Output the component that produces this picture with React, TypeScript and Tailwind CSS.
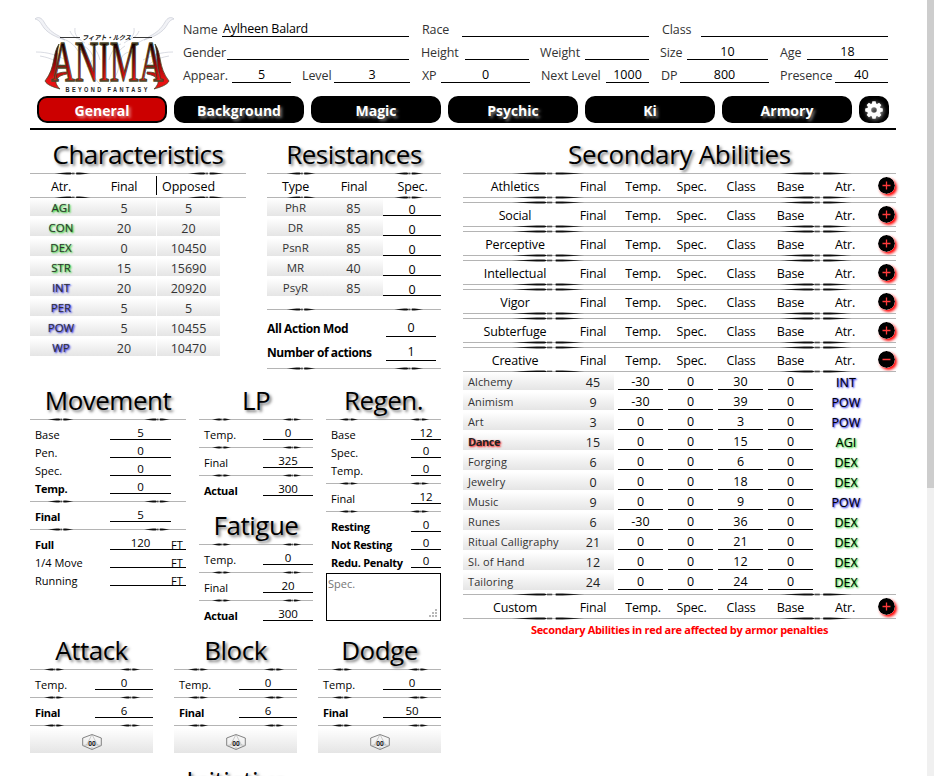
import React from "react";

const FONT = "font-['Open_Sans','Noto_Sans','Noto_Sans_CJK_JP',sans-serif]";

function Divider({ className = "" }: { className?: string }) {
  return (
    <svg className={`block h-[3px] w-full shrink-0 ${className}`} viewBox="0 0 1000 3" preserveAspectRatio="none">
      <rect x="0" y="1" width="1000" height="1" fill="#b4b4b4" />
      {[0, 618].map((x) => (
        <g key={x} transform={`translate(${x} 0)`}>
          <polygon points="113,1.5 150,0.9 192,0.9 192,2.1 150,2.1" fill="#000" opacity="0.85" />
          <polygon points="125,1.5 170,0 188,0 194,1.5 188,3 170,3" fill="#000" opacity="0.45" />
          <rect x="194" y="0.6" width="12" height="1.8" fill="#000" opacity="0.6" />
          <polygon points="214,0.9 245,0.9 280,1.5 245,2.1 214,2.1" fill="#000" opacity="0.85" />
          <polygon points="214,0 230,0 268,1.5 230,3 214,3" fill="#000" opacity="0.45" />
        </g>
      ))}
    </svg>
  );
}

function Title({ children, spacing = "tracking-[-0.5px]" }: { children: string; spacing?: string }) {
  return (
    <h2 className={`flex h-[42px] shrink-0 items-center justify-center whitespace-nowrap pt-[6px] text-[26px] leading-none text-black [text-shadow:2px_2px_3px_rgba(0,0,0,0.55)] ${spacing}`}>
      {children}
    </h2>
  );
}

type FieldProps = { label: string; value?: string; lw: string; vw: string; left?: boolean };

function Field({ label, value = "", lw, vw, left }: FieldProps) {
  return (
    <div className="flex h-[23px]">
      <span className={`${lw} shrink-0 whitespace-nowrap pt-[7px] text-[12.5px] leading-[18px] tracking-[-0.1px] text-[#333]`}>{label}</span>
      <span className={`${vw} ${left ? "pl-px text-left tracking-[-0.2px]" : "text-center"} shrink-0 whitespace-nowrap border-b border-black pt-[6px] text-[12.5px] leading-[17px] text-black`}>
        {value}
      </span>
    </div>
  );
}

function Tab({ label, active }: { label: string; active?: boolean }) {
  return (
    <button className={`h-[27px] w-[130px] rounded-[10px] border-2 border-black pt-px text-[14px] leading-[23px] font-bold text-white [text-shadow:2px_2px_3px_rgba(255,255,255,0.5)] ${active ? "bg-[#cc0000]" : "bg-black"}`}>
      {label}
    </button>
  );
}

const CELL = "h-[18px] bg-linear-to-b from-white to-[#e5e5e5]";
const GREEN = "[text-shadow:1px_1px_2px_#00c800,0_0_1px_#00c80080]";
const BLUE = "[text-shadow:1px_1px_2px_#0000e0,0_0_1px_#0000e080]";
const HEAD = "flex h-[21px] text-center text-[12.5px] leading-[24px] tracking-[-0.15px]";

const attributes = [
  ["AGI", "5", "5"], ["CON", "20", "20"], ["DEX", "0", "10450"], ["STR", "15", "15690"],
  ["INT", "20", "20920"], ["PER", "5", "5"], ["POW", "5", "10455"], ["WP", "20", "10470"],
];

function glow(a: string) {
  return ["AGI", "CON", "DEX", "STR"].includes(a) ? GREEN : BLUE;
}

function Characteristics() {
  return (
    <section className="w-[216px]">
      <Title>Characteristics</Title>
      <Divider />
      <div className={HEAD}>
        <span className="w-[62px]">Atr.</span>
        <span className="w-[64px]">Final</span>
        <span className="my-px w-[64px] border-l border-black leading-[22px] tracking-normal">Opposed</span>
      </div>
      <Divider className="-mb-px" />
      {attributes.map(([a, f, o]) => (
        <div key={a} className="mb-[2px] flex h-[18px] text-center text-[12.5px] leading-[21px] text-[#333]">
          <span className={`${CELL} w-[62px] text-[11.5px] leading-[20px] ${glow(a)}`}>{a}</span>
          <span className={`${CELL} w-[64px]`}>{f}</span>
          <span className={`${CELL} ml-px w-[63px]`}>{o}</span>
        </div>
      ))}
    </section>
  );
}

const resistances = [["PhR", "85"], ["DR", "85"], ["PsnR", "85"], ["MR", "40"], ["PsyR", "85"]];

function Resistances() {
  return (
    <section className="w-[174px]">
      <Title>Resistances</Title>
      <Divider />
      <div className={HEAD}>
        <span className="w-[57px]">Type</span>
        <span className="w-[60px]">Final</span>
        <span className="w-[57px]">Spec.</span>
      </div>
      <Divider className="-mb-px" />
      {resistances.map(([n, v]) => (
        <div key={n} className="mb-[2px] flex h-[18px] text-center text-[12.5px] leading-[21px] text-[#333]">
          <span className={`${CELL} w-[57px] text-[11.5px] leading-[20px]`}>{n}</span>
          <span className={`${CELL} w-[59px]`}>{v}</span>
          <span className="h-[18px] w-[58px] border-b border-black leading-[24px] text-black">0</span>
        </div>
      ))}
      <Divider className="mt-[12px]" />
      {[["All Action Mod", "0"], ["Number of actions", "1"]].map(([n, v], i) => (
        <div key={n} className={`flex h-[24px] items-end ${i === 0 ? "mt-[2px]" : ""}`}>
          <span className="w-[119px] whitespace-nowrap text-[12px] leading-[17px] font-bold tracking-[-0.4px]">{n}</span>
          <span className="w-[50px] border-b border-black text-center text-[12.5px] leading-[17px]">{v}</span>
        </div>
      ))}
      <Divider className="mt-[6px]" />
    </section>
  );
}

function Stat({ label, value = "", vw, bold, unit }: { label: string; value?: string; vw: string; bold?: boolean; unit?: boolean }) {
  return (
    <div className="flex h-[18px] items-stretch">
      <span className={`grow whitespace-nowrap pl-[5px] pt-[4px] text-[11px] leading-[17px] ${bold ? "font-bold tracking-[-0.3px]" : ""}`}>{label}</span>
      <span className={`${vw} shrink-0 border-b border-black pt-[4px] text-center text-[11.5px] leading-[14px]`}>{value}</span>
      {unit ? (
        <span className="w-[15px] shrink-0 border-b border-black pt-[4px] text-[11px] leading-[17px]">FT</span>
      ) : null}
    </div>
  );
}

const GAP = "mt-[6px] mb-px";

function Movement() {
  return (
    <section className="w-[156px]">
      <Title>Movement</Title>
      <Divider className="mb-px" />
      <div className="pr-[15px]">
        <Stat label="Base" value="5" vw="w-[61px]" />
        <Stat label="Pen." value="0" vw="w-[61px]" />
        <Stat label="Spec." value="0" vw="w-[61px]" />
        <Stat label="Temp." value="0" vw="w-[61px]" bold />
      </div>
      <Divider className={GAP} />
      <div className="pr-[15px]">
        <Stat label="Final" value="5" vw="w-[61px]" bold />
      </div>
      <Divider className={GAP} />
      <Stat label="Full" value="120" vw="w-[61px]" bold unit />
      <Stat label="1/4 Move" vw="w-[61px]" unit />
      <Stat label="Running" vw="w-[61px]" unit />
    </section>
  );
}

function Pool({ title, final }: { title: string; final: string }) {
  return (
    <section>
      <Title>{title}</Title>
      <Divider className="mb-px" />
      <Stat label="Temp." value="0" vw="w-[50px]" />
      <Divider className={GAP} />
      <Stat label="Final" value={final} vw="w-[50px]" />
      <Divider className={GAP} />
      <Stat label="Actual" value="300" vw="w-[50px]" bold />
    </section>
  );
}

function Regen() {
  return (
    <section className="w-[115px]">
      <Title>Regen.</Title>
      <Divider className="mb-px" />
      <Stat label="Base" value="12" vw="w-[30px]" />
      <Stat label="Spec." value="0" vw="w-[30px]" />
      <Stat label="Temp." value="0" vw="w-[30px]" />
      <Divider className={GAP} />
      <Stat label="Final" value="12" vw="w-[30px]" />
      <Divider className={GAP} />
      <Stat label="Resting" value="0" vw="w-[30px]" bold />
      <Stat label="Not Resting" value="0" vw="w-[30px]" bold />
      <Stat label="Redu. Penalty" value="0" vw="w-[30px]" bold />
      <div className="mt-[5px] flex h-[48px] items-end justify-between border border-black">
        <span className="self-start pl-px pt-px text-[11px] leading-[17px] text-[#757575]">Spec.</span>
        <svg className="mr-[2px] mb-[2px] size-[9px]" viewBox="0 0 9 9" fill="#b8b8b8">
          <rect x="6" y="0" width="2" height="2" />
          <rect x="3" y="3" width="2" height="2" />
          <rect x="6" y="3" width="2" height="2" />
          <rect x="0" y="6" width="2" height="2" />
          <rect x="3" y="6" width="2" height="2" />
          <rect x="6" y="6" width="2" height="2" />
        </svg>
      </div>
    </section>
  );
}

function Dice() {
  return (
    <svg className="h-[16px] w-[20px]" viewBox="0 0 20 16" fill="none" stroke="#666" strokeWidth="0.8">
      <path d="M10 .5 19.3 4v7.500L10 15.500.7 11.500V4Z" />
      <path d="M10 .5 4.500 11h11Z M.7 11.500 4.500 11M19.300 11.500 15.500 11M10 15.500V13" stroke="#aaa" strokeWidth="0.6" />
      <text x="10" y="11.500" textAnchor="middle" fontSize="6.500" fontWeight="700" fill="#222" stroke="none">00</text>
    </svg>
  );
}

function Combat({ title, value }: { title: string; value: string }) {
  return (
    <section className="w-[123px]">
      <Title>{title}</Title>
      <Divider className="mb-px" />
      <Stat label="Temp." value="0" vw="w-[58px]" />
      <Divider className={GAP} />
      <Stat label="Final" value={value} vw="w-[58px]" bold />
      <Divider className={GAP} />
      <button className="flex h-[25px] w-full items-center justify-center bg-linear-to-b from-white to-[#e5e5e5] pt-[3px]">
        <Dice />
      </button>
    </section>
  );
}

const abilities = [
  ["Alchemy", "45", "-30", "30", "INT"], ["Animism", "9", "-30", "39", "POW"], ["Art", "3", "0", "3", "POW"],
  ["Dance", "15", "0", "15", "AGI"], ["Forging", "6", "0", "6", "DEX"], ["Jewelry", "0", "0", "18", "DEX"],
  ["Music", "9", "0", "9", "POW"], ["Runes", "6", "-30", "36", "DEX"], ["Ritual Calligraphy", "21", "0", "21", "DEX"],
  ["Sl. of Hand", "12", "0", "12", "DEX"], ["Tailoring", "24", "0", "24", "DEX"],
];

function GroupHeader({ name, open }: { name: string; open?: boolean }) {
  return (
    <div>
      <Divider />
      <div className={HEAD}>
        <span className="w-[104px]">{name}</span>
        <span className="w-[52px]">Final</span>
        <span className="w-[48px]">Temp.</span>
        <span className="w-[49px]">Spec.</span>
        <span className="w-[50px]">Class</span>
        <span className="w-[49px]">Base</span>
        <span className="w-[60px]">Atr.</span>
        <span className="flex grow items-center justify-center pl-px">
          <svg className="size-[17px] rounded-full shadow-[2px_2px_3px_#ff0000]" viewBox="0 0 17 17">
            <circle cx="8.500" cy="8.500" r="8.500" fill="#000" />
            <path d={open ? "M4.500 8.500h8" : "M4.500 8.500h8M8.500 4.500v8"} stroke="#ff3b3b" strokeWidth="1.300" />
          </svg>
        </span>
      </div>
      <Divider />
    </div>
  );
}

function SecondaryAbilities() {
  return (
    <section className="w-[433px]">
      <Title spacing="tracking-[-0.3px]">Secondary Abilities</Title>
      <div className="flex flex-col gap-[2px]">
        {["Athletics", "Social", "Perceptive", "Intellectual", "Vigor", "Subterfuge"].map((n) => (
          <GroupHeader key={n} name={n} />
        ))}
        <GroupHeader name="Creative" open />
      </div>
      <div className="-mt-px pb-px">
        {abilities.map(([n, f, t, c, a]) => (
          <div key={n} className="mb-[2px] flex h-[18px] text-center text-[12.5px]">
            <span className={`${CELL} w-[109px] pl-[5px] text-left text-[11px] leading-[20px] ${n === "Dance" ? "font-bold tracking-[-0.4px] text-[#222] [text-shadow:1px_1px_2px_#ff0000]" : "tracking-[0.1px] text-[#333]"}`}>{n}</span>
            <span className={`${CELL} w-[42px] leading-[21px] text-[#222]`}>{f}</span>
            {[t, "0", c, "0"].map((v, i) => (
              <span key={i} className={`h-[18px] w-[45px] border-b border-black leading-[19px] ${i === 0 ? "ml-[4px]" : "ml-[5px]"}`}>{v}</span>
            ))}
            <span className={`ml-[11px] w-[44px] leading-[21px] ${glow(a)}`}>{a}</span>
          </div>
        ))}
      </div>
      <GroupHeader name="Custom" />
      <p className="pt-[2px] text-center text-[11px] leading-[16px] font-bold tracking-[-0.32px] text-[#ff0000]">
        Secondary Abilities in red are affected by armor penalties
      </p>
    </section>
  );
}

function Logo() {
  return (
    <svg className="h-[80px] w-[144px] shrink-0" viewBox="32 14 144 80" fill="none">
      <defs>
        <linearGradient id="blood" x1="0" y1="42" x2="0" y2="84" gradientUnits="userSpaceOnUse">
          <stop offset="0.05" stopColor="#120000" />
          <stop offset="0.5" stopColor="#8c0707" />
          <stop offset="0.9" stopColor="#e81212" />
        </linearGradient>
        <g id="wing">
          <path d="M35 19c3-3 7-1 9 3 4 7 9 11 15 14l6 4c-9-3-16-6-21-12-3-4-4-8-9-9Z" fill="#f1f2f6" />
          <path d="M36 52c12 0 20 3 30 8M40 56c12 2 18 6 24 12M60 38c8 2 14 6 18 13M70 31c2 5 5 7 11 9M75 28c-1 7 3 11 10 15" />
          <path d="M84 46c8 5 12 13 11 24M80 52c8 2 9 8 7 15M88 44c6 2 10 8 12 16M92 60c-4 8 0 16 8 24" />
        </g>
      </defs>
      <g stroke="#c9cbd5" strokeWidth="0.7">
        <use href="#wing" />
        <use href="#wing" transform="matrix(-1 0 0 1 209 0)" />
      </g>
      <path d="M60 37.500h20M133 37.500h19" stroke="#222" strokeWidth="0.9" />
      <text x="82" y="40" fontSize="6.500" fontWeight="700" fontStyle="italic" fill="#111" textLength="49" lengthAdjust="spacingAndGlyphs" fontFamily="Noto Sans CJK JP">フィアト・ルクス</text>
      <g stroke="#4a4728" strokeWidth="0.8" fill="url(#blood)">
        <path d="M59 44C52 54 56 67 45 81c2 4 8 6 15 8-4-4-5-7-3-10 2-3 5-4 10-5v-2c-6 0-10 1-13 4 4-10 2-20 5-32Z" />
        <path d="M155 44c7 10 3 23 14 37-2 4-8 6-15 8 4-4 5-7 3-10-2-3-5-4-10-5v-2c6 0 10 1 13 4-4-10-2-20-5-32Z" />
        <text x="51" y="80.500" fontSize="56" fontFamily="Liberation Serif" textLength="112" lengthAdjust="spacingAndGlyphs" strokeWidth="1.300">ANIMA</text>
        <text x="51" y="80.500" fontSize="56" fontFamily="Liberation Serif" textLength="112" lengthAdjust="spacingAndGlyphs" stroke="none" aria-hidden="true" />
      </g>
      <text transform="translate(65.500 91.500) scale(0.7 1)" fontSize="8" fontWeight="700" fill="#222" textLength="117" fontFamily="Liberation Sans">BEYOND FANTASY</text>
    </svg>
  );
}

export default function App() {
  return (
    <div className={`flex h-[776px] w-[934px] justify-between overflow-hidden bg-white text-black ${FONT}`}>
      <div className="ml-[30px] w-[866px]">
        <header className="flex h-[96px] pt-[14px]">
          <div className="ml-[2px] w-[151px]"><Logo /></div>
          <div>
            <div className="flex">
              <Field label="Name" value="Aylheen Balard" lw="w-[39px]" vw="w-[187px]" left />
              <div className="w-[13px]" />
              <Field label="Race" lw="w-[40px]" vw="w-[187px]" />
              <div className="w-[13px]" />
              <Field label="Class" lw="w-[39px]" vw="w-[187px]" />
            </div>
            <div className="flex">
              <Field label="Gender" lw="w-[44px]" vw="w-[182px]" />
              <div className="w-[12px]" />
              <Field label="Height" lw="w-[44px]" vw="w-[64px]" />
              <div className="w-[11px]" />
              <Field label="Weight" lw="w-[45px]" vw="w-[64px]" />
              <div className="w-[11px]" />
              <Field label="Size" value="10" lw="w-[27px]" vw="w-[81px]" />
              <div className="w-[12px]" />
              <Field label="Age" value="18" lw="w-[27px]" vw="w-[81px]" />
            </div>
            <div className="flex">
              <Field label="Appear." value="5" lw="w-[49px]" vw="w-[59px]" />
              <div className="w-[11px]" />
              <Field label="Level" value="3" lw="w-[32px]" vw="w-[76px]" />
              <div className="w-[12px]" />
              <Field label="XP" value="0" lw="w-[19px]" vw="w-[89px]" />
              <div className="w-[11px]" />
              <Field label="Next Level" value="1000" lw="w-[65px]" vw="w-[43px]" />
              <div className="w-[12px]" />
              <Field label="DP" value="800" lw="w-[19px]" vw="w-[89px]" />
              <div className="w-[11px]" />
              <Field label="Presence" value="40" lw="w-[55px]" vw="w-[53px]" />
            </div>
          </div>
        </header>
        <nav className="flex h-[34px] gap-[7px] border-b-2 border-black pl-[7px]">
          <Tab label="General" active />
          <Tab label="Background" />
          <Tab label="Magic" />
          <Tab label="Psychic" />
          <Tab label="Ki" />
          <Tab label="Armory" />
          <button className="flex h-[27px] w-[30px] items-center justify-center rounded-[10px] bg-black pt-px">
            <svg className="size-[18px] drop-shadow-[1px_1px_2px_rgba(255,255,255,0.6)]" viewBox="-9 -9 18 18">
              <circle r="4.800" fill="none" stroke="#fff" strokeWidth="4" />
              {[0, 45, 90, 135, 180, 225, 270, 315].map((d) => (
                <path key={d} d="M-2.200-6-1.600-8.800h3.200L2.200-6Z" fill="#fff" transform={`rotate(${d})`} />
              ))}
            </svg>
          </button>
        </nav>
        <main className="flex justify-between">
          <div className="w-[411px]">
            <div className="flex h-[246px] justify-between">
              <Characteristics />
              <Resistances />
            </div>
            <div className="flex h-[250px]">
              <Movement />
              <div className="mr-[13px] ml-[13px] flex w-[114px] flex-col gap-[5px]">
                <Pool title="LP" final="325" />
                <Pool title="Fatigue" final="20" />
              </div>
              <Regen />
            </div>
            <div className="flex h-[130px] justify-between">
              <Combat title="Attack" value="6" />
              <Combat title="Block" value="6" />
              <Combat title="Dodge" value="50" />
            </div>
            <Title>Initiative</Title>
          </div>
          <SecondaryAbilities />
        </main>
      </div>
      <div className="w-[7px] bg-[#f0f0f0]">
        <div className="h-[488px] bg-[#cdcdcd]" />
      </div>
    </div>
  );
}
